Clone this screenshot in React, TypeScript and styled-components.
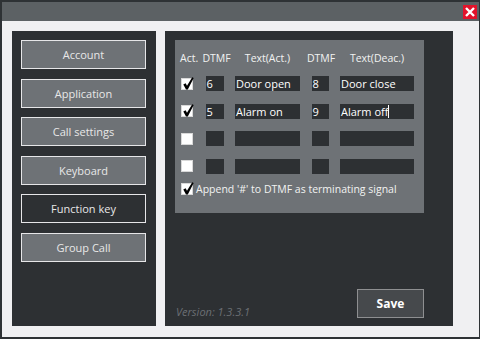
import styled, { createGlobalStyle } from "styled-components";

const GlobalStyle = createGlobalStyle`
  html, body {
    margin: 0;
    padding: 0;
    background: #2e3235;
  }
  body {
    font-family: "Open Sans", "Noto Sans", sans-serif;
  }
`;

const StyledWindow = styled.div`
  width: 477px;
  height: 335px;
  border-style: solid;
  border-color: #2e3235;
  border-width: 2px 1px 2px 2px;
  display: flex;
  flex-direction: column;
  background: #f0f0f2;
`;

export default function App() {
  return (
    <>
      <GlobalStyle />
      <StyledWindow>
        <TitleBar />
        <StyledContent>
          <SideMenu />
          <MainPanel />
        </StyledContent>
      </StyledWindow>
    </>
  );
}

// Title bar with the close button
const StyledTitleBar = styled.div`
  height: 19px;
  background: #5c6164;
  display: flex;
  align-items: center;
  justify-content: flex-end;
  padding-right: 2px;
`;
const CloseButton = styled.button`
  width: 14px;
  height: 14px;
  padding: 0;
  border: none;
  background: #e2132b;
  display: flex;
  align-items: center;
  justify-content: center;
  cursor: pointer;
`;
function TitleBar() {
  return (
    <StyledTitleBar>
      <CloseButton aria-label="Close">
        <svg width="10" height="10" viewBox="0 0 10 10">
          <path d="M1 1 L9 9 M9 1 L1 9" stroke="#fff" strokeWidth="2.4" />
        </svg>
      </CloseButton>
    </StyledTitleBar>
  );
}

const StyledContent = styled.div`
  flex: 1;
  display: flex;
  gap: 9px;
  padding: 10px 26px 11px 10px;
`;

// Left menu
const menuItems = [
  "Account",
  "Application",
  "Call settings",
  "Keyboard",
  "Function key",
  "Group Call",
];
const StyledSideMenu = styled.nav`
  width: 144px;
  background: #2d3033;
  display: flex;
  flex-direction: column;
  gap: 9.5px;
  padding: 9px 0 0 9px;
  box-sizing: border-box;
`;
const MenuButton = styled.button<{ $active?: boolean }>`
  width: 125px;
  height: 29px;
  box-sizing: border-box;
  border: 1px solid #e6e6e8;
  background: ${(p) => (p.$active ? "#2d3033" : "#6e7276")};
  color: #e8e8e8;
  font-family: "Open Sans", sans-serif;
  font-size: 11px;
  padding: 0;
  cursor: pointer;
`;
function SideMenu() {
  return (
    <StyledSideMenu>
      {menuItems.map((item) => (
        <MenuButton key={item} $active={item === "Function key"}>
          {item}
        </MenuButton>
      ))}
    </StyledSideMenu>
  );
}

// Right panel
const StyledMainPanel = styled.div`
  width: 288px;
  background: #2d3033;
  display: flex;
  flex-direction: column;
  padding: 9px 29px 8px 10px;
  box-sizing: border-box;
`;
const Footer = styled.div`
  margin-top: auto;
  display: flex;
  align-items: flex-end;
  justify-content: space-between;
`;
const Version = styled.span`
  font-style: italic;
  font-size: 11px;
  line-height: 15px;
  color: #6b6f73;
  margin: 0 0 -1px 1px;
`;
const SaveButton = styled.button`
  width: 67px;
  height: 29px;
  box-sizing: border-box;
  background: #46494c;
  border: 1px solid #8e8f91;
  color: #fff;
  font-family: "Open Sans", sans-serif;
  font-weight: bold;
  font-size: 12px;
  padding: 0;
  cursor: pointer;
`;
function MainPanel() {
  return (
    <StyledMainPanel>
      <KeyTable />
      <Footer>
        <Version>Version: 1.3.3.1</Version>
        <SaveButton>Save</SaveButton>
      </Footer>
    </StyledMainPanel>
  );
}

// Function key table
const keys = [
  { on: true, dtmf: "6", act: "Door open", dtmf2: "8", deac: "Door close" },
  { on: true, dtmf: "5", act: "Alarm on", dtmf2: "9", deac: "Alarm off" },
  { on: false, dtmf: "", act: "", dtmf2: "", deac: "" },
  { on: false, dtmf: "", act: "", dtmf2: "", deac: "" },
];
const StyledKeyTable = styled.div`
  width: 249px;
  height: 173px;
  box-sizing: border-box;
  background: #6e7276;
  padding: 11px 0 0 6px;
  display: flex;
  flex-direction: column;
`;
const Row = styled.div`
  display: grid;
  grid-template-columns: 13px 18px 65px 17px 74px;
  column-gap: 11.5px;
  align-items: center;
  height: 15px;
`;
const Rows = styled.div`
  margin-top: 10px;
  display: flex;
  flex-direction: column;
  gap: 12.67px;
`;
const HeadCell = styled.span<{ $start?: boolean; $shift?: number }>`
  justify-self: ${(p) => (p.$start ? "start" : "center")};
  margin-left: ${(p) => (p.$start ? -1 : p.$shift ?? 0)}px;
  white-space: nowrap;
  color: #f2f2f2;
  font-size: 10.5px;
  line-height: 15px;
`;
const Field = styled.div`
  height: 15px;
  background: #2d3033;
  color: #fff;
  font-size: 11px;
  line-height: 15px;
  padding-left: 1px;
  white-space: nowrap;
  overflow: hidden;
`;
const Caret = styled.span`
  display: inline-block;
  width: 1px;
  height: 13px;
  background: #fff;
  vertical-align: -2px;
`;
const Box = styled.span`
  width: 12px;
  height: 12px;
  background: #fff;
  border: 1px solid #d8d8d8;
  box-sizing: border-box;
  position: relative;
  display: inline-block;
  flex-shrink: 0;

  & > svg {
    position: absolute;
    left: 1px;
    top: -2px;
  }
`;
function CheckBox({ checked }: { checked: boolean }) {
  return (
    <Box>
      {checked && (
        <svg width="11" height="13" viewBox="0 0 11 13">
          <path d="M0.3 7.4 L2.6 6.2 L4 8.8 L9.2 0.3 L10.7 1.1 L4.8 12.6 L3 12.6 Z" fill="#000" />
        </svg>
      )}
    </Box>
  );
}
const AppendRow = styled.label`
  margin-top: 7.5px;
  height: 15px;
  display: flex;
  align-items: center;
  gap: 3px;
  color: #f2f2f2;
  font-size: 10.5px;
`;
function KeyTable() {
  return (
    <StyledKeyTable>
      <Row>
        <HeadCell $start>Act.</HeadCell>
        <HeadCell $shift={4}>DTMF</HeadCell>
        <HeadCell>Text(Act.)</HeadCell>
        <HeadCell $shift={2}>DTMF</HeadCell>
        <HeadCell>Text(Deac.)</HeadCell>
      </Row>
      <Rows>
        {keys.map((k, i) => (
          <Row key={i}>
            <CheckBox checked={k.on} />
            <Field>{k.dtmf}</Field>
            <Field>{k.act}</Field>
            <Field>{k.dtmf2}</Field>
            <Field>
              {k.deac}
              {i === 1 && <Caret />}
            </Field>
          </Row>
        ))}
      </Rows>
      <AppendRow>
        <CheckBox checked />
        Append '#' to DTMF as terminating signal
      </AppendRow>
    </StyledKeyTable>
  );
}
